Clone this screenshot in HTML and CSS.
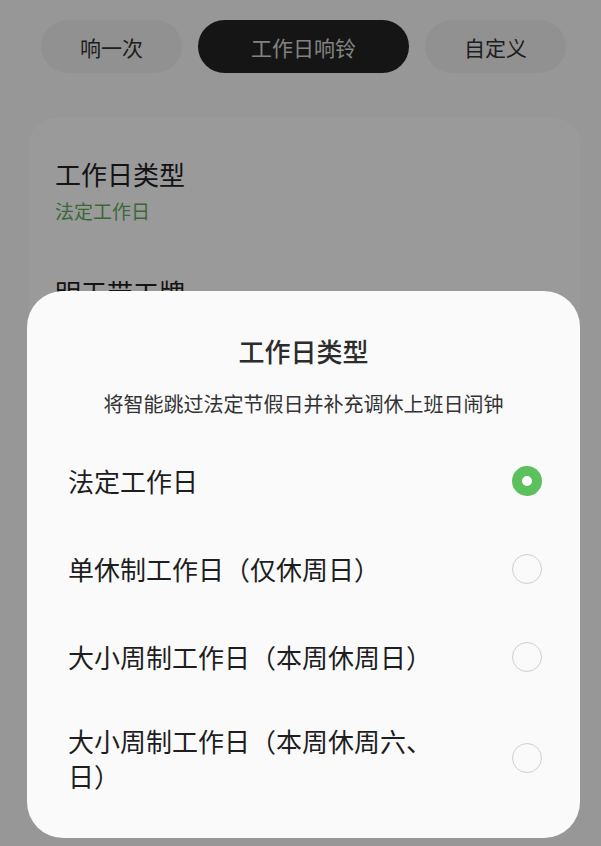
FILE: index.html
```html
<!DOCTYPE html>
<html lang="zh-CN">
<head>
    <meta charset="UTF-8">
    <meta name="viewport" content="width=device-width, initial-scale=1.0">
    <title>工作日类型</title>
    <link rel="stylesheet" href="styles.css">
</head>
<body>

    <div class="tabs">
        <div class="tab">响一次</div>
        <div class="tab active">工作日响铃</div>
        <div class="tab">自定义</div>
    </div>

    <div class="card">
        <div class="item">
            <div class="item-title">工作日类型</div>
            <div class="item-value">法定工作日</div>
        </div>
        <div class="item">
            <div class="item-title">明天带工牌</div>
        </div>
    </div>

    <!-- 遮罩 + 底部弹窗 -->
    <div class="mask"></div>
    <div class="sheet">
        <h2 class="sheet-title">工作日类型</h2>
        <p class="sheet-desc">将智能跳过法定节假日并补充调休上班日闹钟</p>
        <ul class="options">
            <li class="option">
                <span class="label">法定工作日</span>
                <span class="radio checked"></span>
            </li>
            <li class="option">
                <span class="label">单休制工作日（仅休周日）</span>
                <span class="radio"></span>
            </li>
            <li class="option">
                <span class="label">大小周制工作日（本周休周日）</span>
                <span class="radio"></span>
            </li>
            <li class="option">
                <span class="label">大小周制工作日（本周休周六、日）</span>
                <span class="radio"></span>
            </li>
        </ul>
    </div>

</body>
</html>
```

FILE: styles.css
```css
body {
    margin: 0;
    font-family: "Noto Sans CJK SC", "Noto Sans", sans-serif;
    background-color: #fbfbfb;
    color: #222;
    height: 846px;
    overflow: hidden;
}
.tabs {
    display: flex;
    justify-content: center;
    gap: 16px;
    padding-top: 20px;
    padding-left: 6px;
}
.tab {
    width: 141px;
    height: 53px;
    border-radius: 27px;
    background-color: #f1f1f1;
    display: flex;
    align-items: center;
    justify-content: center;
    font-size: 21px;
    color: #333;
}
.tab.active {
    width: 211px;
    background-color: #242424;
    color: #d8d8d8;
}
.card {
    margin: 45px 21px 0 29px;
    background-color: #ffffff;
    border-radius: 26px;
    padding: 28px 26px;
    height: 400px;
}
.item {
    padding: 10px 0;
}
.item + .item {
    margin-top: 29px;
}
.item-title {
    font-size: 26px;
    line-height: 36px;
}
.item-value {
    font-size: 19px;
    line-height: 28px;
    color: #5fae5f;
    margin-top: 5px;
}
.mask {
    position: fixed;
    inset: 0;
    background-color: rgba(0, 0, 0, 0.395);
}
.sheet {
    position: fixed;
    left: 27px;
    right: 21px;
    bottom: 8px;
    background-color: #fafafa;
    border-radius: 36px;
    padding: 42px 0 14px;
}
.sheet-title {
    margin: 0;
    text-align: center;
    font-size: 26px;
    line-height: 36px;
    font-weight: 500;
    color: #2c2c2c;
}
.sheet-desc {
    margin: 21px 0 0;
    text-align: center;
    font-size: 20px;
    line-height: 28px;
    color: #333;
}
.options {
    list-style: none;
    margin: 19px 0 0;
    padding: 0 38px 0 41px;
}
.option {
    display: flex;
    align-items: center;
    padding: 26px 0 27px;
}
.option:last-child {
    padding: 22px 0 31px;
}
.label {
    flex: 1;
    font-size: 26px;
    line-height: 35px;
    margin-right: 62px;
    color: #1e1e1e;
}
.radio {
    width: 30px;
    height: 30px;
    box-sizing: border-box;
    border-radius: 50%;
    border: 1.5px solid #cfcfcf;
    flex-shrink: 0;
}
.radio.checked {
    border: 10px solid #5cc05c;
    background-color: #fff;
}
```
